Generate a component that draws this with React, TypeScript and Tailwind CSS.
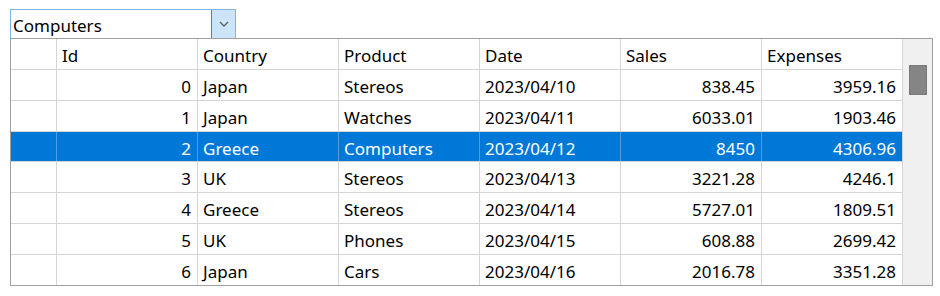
import React from "react";

const rows = [
  { id: 0, country: "Japan", product: "Stereos", date: "2023/04/10", sales: "838.45", exp: "3959.16" },
  { id: 1, country: "Japan", product: "Watches", date: "2023/04/11", sales: "6033.01", exp: "1903.46" },
  { id: 2, country: "Greece", product: "Computers", date: "2023/04/12", sales: "8450", exp: "4306.96" },
  { id: 3, country: "UK", product: "Stereos", date: "2023/04/13", sales: "3221.28", exp: "4246.1" },
  { id: 4, country: "Greece", product: "Stereos", date: "2023/04/14", sales: "5727.01", exp: "1809.51" },
  { id: 5, country: "UK", product: "Phones", date: "2023/04/15", sales: "608.88", exp: "2699.42" },
  { id: 6, country: "Japan", product: "Cars", date: "2023/04/16", sales: "2016.78", exp: "3351.28" },
];

const heights = ["h-[31px]", "h-[31px]", "h-[30px]", "h-[31px]", "h-[31px]", "h-[31px]", "h-[30px]"];

export default function App() {
  return (
    <div
      className="w-[940px] h-[296px] bg-white pt-[9px] pl-[10px] text-[17px] text-black"
      style={{ fontFamily: '"Noto Sans", "Open Sans", sans-serif' }}
    >
      {/* Combobox */}
      <div className="flex w-[226px] h-[30px] border border-[#7eb4ea] bg-white">
        <div className="flex-1 flex items-center pl-[2px] pt-[3px] leading-none">Computers</div>
        <div className="w-[24px] h-full flex items-center justify-center bg-[#cce4f7] border-l border-[#3d85c6]">
          <svg width="10" height="6" viewBox="0 0 10 6">
            <path d="M1 1 L5 5 L9 1" fill="none" stroke="#606060" strokeWidth="1.3" />
          </svg>
        </div>
      </div>

      {/* Grid */}
      <div className="flex w-[923px] border border-[#a0a0a0] -mt-[1px] relative">
        <div className="flex flex-col">
          {/* header */}
          <div className="flex h-[31px] border-b border-[#d4d4d4]">
            <div className="w-[46px] border-r border-[#d4d4d4]" />
            {["Id", "Country", "Product", "Date", "Sales", "Expenses"].map((h) => (
              <div key={h} className="w-[141px] border-r border-[#d4d4d4] flex items-center pl-[5px] pt-[4px]">
                {h}
              </div>
            ))}
          </div>
          {rows.map((r, i) => {
            const sel = r.id === 2;
            const last = i === rows.length - 1;
            const bc = sel ? "border-[#4f9ae0]" : "border-[#d4d4d4]";
            const rowCls = `flex ${heights[i]} ${last ? "" : "border-b border-[#d4d4d4]"} ${sel ? "bg-[#0078d7] text-white" : ""}`;
            return (
              <div key={r.id} className={rowCls}>
                <div className={`w-[46px] border-r ${bc}`} />
                <div className={`w-[141px] border-r ${bc} flex items-center justify-end pr-[6px] pt-[4px]`}>{r.id}</div>
                <div className={`w-[141px] border-r ${bc} flex items-center pl-[5px] pt-[4px]`}>{r.country}</div>
                <div className={`w-[141px] border-r ${bc} flex items-center pl-[5px] pt-[4px]`}>{r.product}</div>
                <div className={`w-[141px] border-r ${bc} flex items-center pl-[5px] pt-[4px]`}>{r.date}</div>
                <div className={`w-[141px] border-r ${bc} flex items-center justify-end pr-[6px] pt-[4px]`}>{r.sales}</div>
                <div className={`w-[141px] border-r border-[#d4d4d4] flex items-center justify-end pr-[6px] pt-[4px]`}>{r.exp}</div>
              </div>
            );
          })}
        </div>
        {/* Scrollbar */}
        <div className="w-[29px] bg-[#f0f0f0] pt-[26px] flex flex-col items-center">
          <div className="w-[18px] h-[30px] bg-[#858585] border border-[#787878]" />
        </div>
      </div>
    </div>
  );
}
